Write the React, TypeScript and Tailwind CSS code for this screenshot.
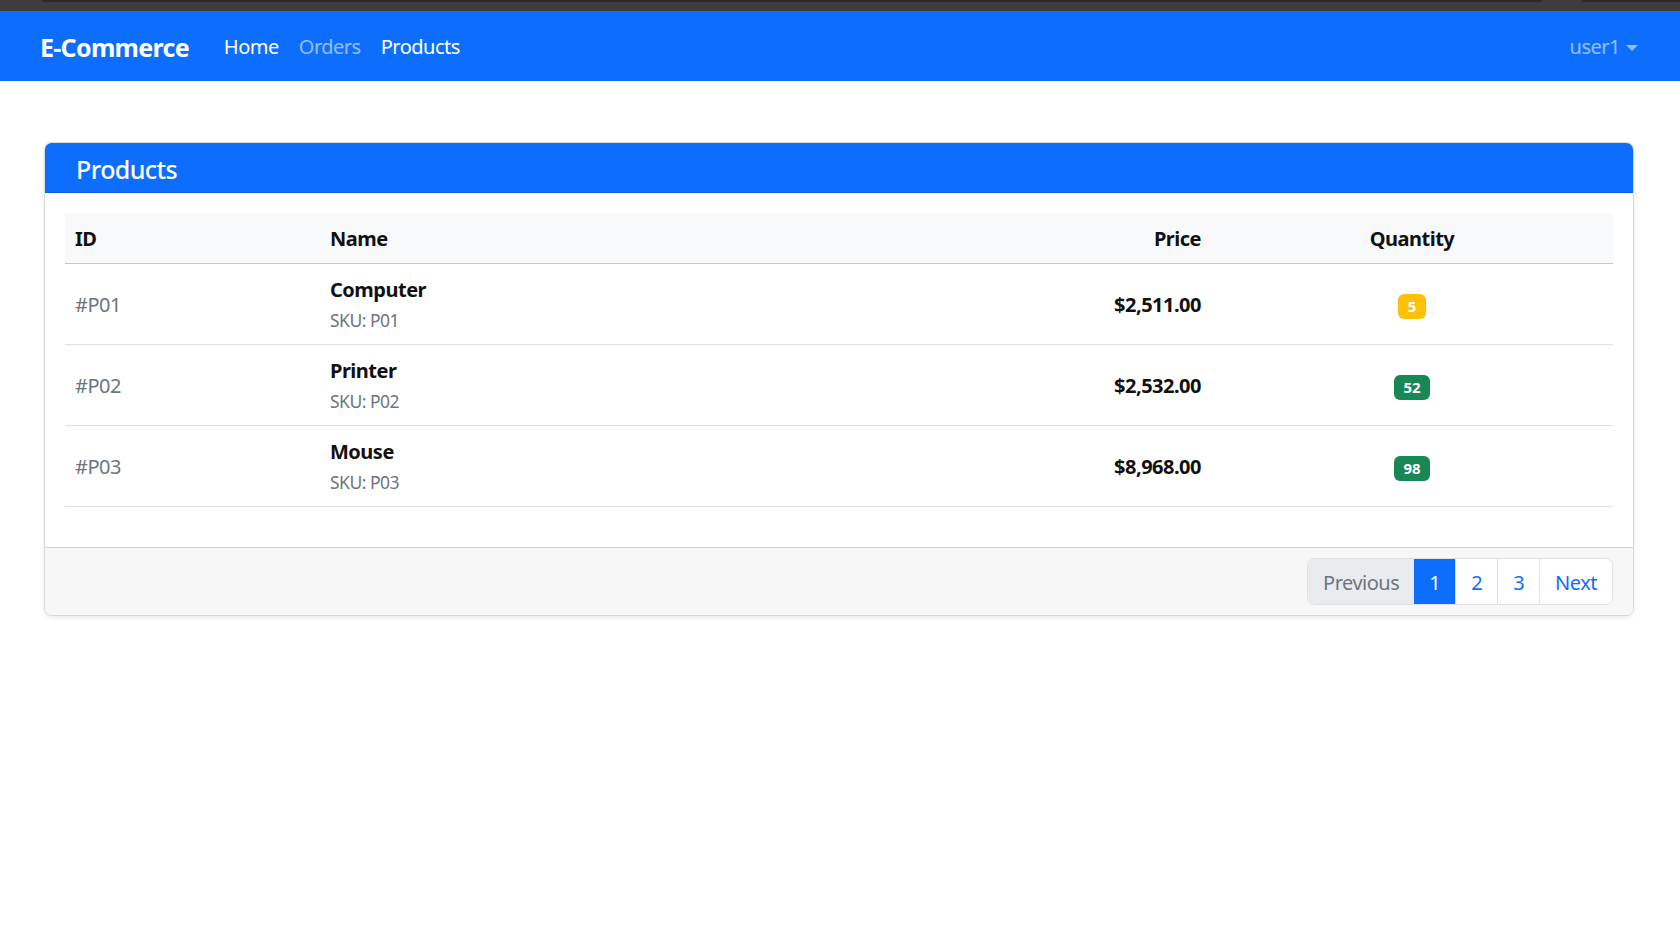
const products = [
  { id: "#P01", name: "Computer", sku: "P01", price: "$2,511.00", qty: 5 },
  { id: "#P02", name: "Printer", sku: "P02", price: "$2,532.00", qty: 52 },
  { id: "#P03", name: "Mouse", sku: "P03", price: "$8,968.00", qty: 98 },
];

export default function App() {
  return (
    <div className="min-h-screen bg-white text-[20px] tracking-[-0.5px] text-[#111] font-['Noto_Sans','Open_Sans',sans-serif]">
      {/* window strip */}
      <div className="h-[11px] bg-[#3c3c3c] flex">
        <div className="ml-[42px] w-[1500px] h-[2px] bg-[#2a2a2a] rounded-b-[3px]" />
        <div className="ml-[40px] flex-1 h-[2px] bg-[#2a2a2a]" />
      </div>

      {/* Navbar */}
      <nav className="h-[70px] bg-[#0d6efd] flex items-center pt-[2px] pl-[40px] pr-[32px]">
        <span className="text-[25px] font-bold tracking-[-0.7px] text-white mr-[25px] leading-[38px]">
          E-Commerce
        </span>
        <div className="flex items-center">
          <a className="px-[10px] text-white leading-[30px]">Home</a>
          <a className="px-[10px] text-white/55 leading-[30px]">Orders</a>
          <a className="px-[10px] text-white leading-[30px]">Products</a>
        </div>
        <div className="ml-auto flex items-center px-[10px] text-white/55 leading-[30px]">
          user1
          <span className="ml-[6px] mt-[1px] w-0 h-0 border-x-[6px] border-x-transparent border-t-[6px] border-t-white/55" />
        </div>
      </nav>

      {/* Content */}
      <main className="pl-[44px] pr-[46px] pt-[61px]">
        <div className="border border-black/15 rounded-[7.5px] shadow-[0_2px_4px_rgba(0,0,0,0.08)] overflow-hidden">
          <div className="h-[50px] bg-[#0d6efd] border-b border-[#0b5ed7] flex items-center pt-[2px] px-[31px]">
            <h5 className="text-[25px] font-medium tracking-[-0.6px] text-white leading-[30px]">Products</h5>
          </div>

          <div className="p-[20px]">
            <table className="w-full border-collapse mb-[20px]">
              <thead>
                <tr className="bg-[#f8f9fa] border-b border-[#c6c7c8]">
                  <th className="w-[255px] px-[10px] pt-[11px] pb-[9px] text-left font-bold leading-[30px]">ID</th>
                  <th className="px-[10px] pt-[11px] pb-[9px] text-left font-bold leading-[30px]">Name</th>
                  <th className="w-[260px] px-[10px] pt-[11px] pb-[9px] text-right font-bold leading-[30px]">Price</th>
                  <th className="w-[402px] px-[10px] pt-[11px] pb-[9px] text-center font-bold leading-[30px]">Quantity</th>
                </tr>
              </thead>
              <tbody>
                {products.map((p) => (
                  <tr key={p.id} className="border-b border-[#dee2e6]">
                    <td className="px-[10px] pt-[11px] pb-[9px] align-middle text-[#6c757d]">{p.id}</td>
                    <td className="px-[10px] pt-[11px] pb-[9px] align-middle">
                      <div className="font-bold leading-[30px]">{p.name}</div>
                      <div className="text-[17.5px] leading-[30px] text-[#6c757d]">SKU: {p.sku}</div>
                    </td>
                    <td className="px-[10px] pt-[11px] pb-[9px] align-middle text-right font-bold">{p.price}</td>
                    <td className="px-[10px] pt-[12px] pb-[10px] align-middle text-center">
                      <span
                        className={
                          "inline-block px-[9.75px] pt-[5.5px] pb-[5px] text-[15px] font-bold tracking-normal leading-[15px] text-white rounded-[6px] " +
                          (p.qty < 10 ? "bg-[#ffc107]" : "bg-[#198754]")
                        }
                      >
                        {p.qty}
                      </span>
                    </td>
                  </tr>
                ))}
              </tbody>
            </table>
          </div>

          <div className="bg-[#f7f7f7] border-t border-black/15 px-[20px] py-[10px] flex justify-end">
            <ul className="flex border border-[#dee2e6] rounded-[7.5px] overflow-hidden">
              <li className="px-[15px] pt-[8.5px] pb-[6.5px] leading-[30px] bg-[#e9ecef] text-[#6c757d]">Previous</li>
              <li className="px-[15px] pt-[8.5px] pb-[6.5px] leading-[30px] bg-[#0d6efd] text-white">1</li>
              <li className="px-[15px] pt-[8.5px] pb-[6.5px] leading-[30px] bg-white text-[#0d6efd] border-l border-[#dee2e6]">2</li>
              <li className="px-[15px] pt-[8.5px] pb-[6.5px] leading-[30px] bg-white text-[#0d6efd] border-l border-[#dee2e6]">3</li>
              <li className="px-[15px] pt-[8.5px] pb-[6.5px] leading-[30px] bg-white text-[#0d6efd] border-l border-[#dee2e6]">Next</li>
            </ul>
          </div>
        </div>
      </main>
    </div>
  );
}
